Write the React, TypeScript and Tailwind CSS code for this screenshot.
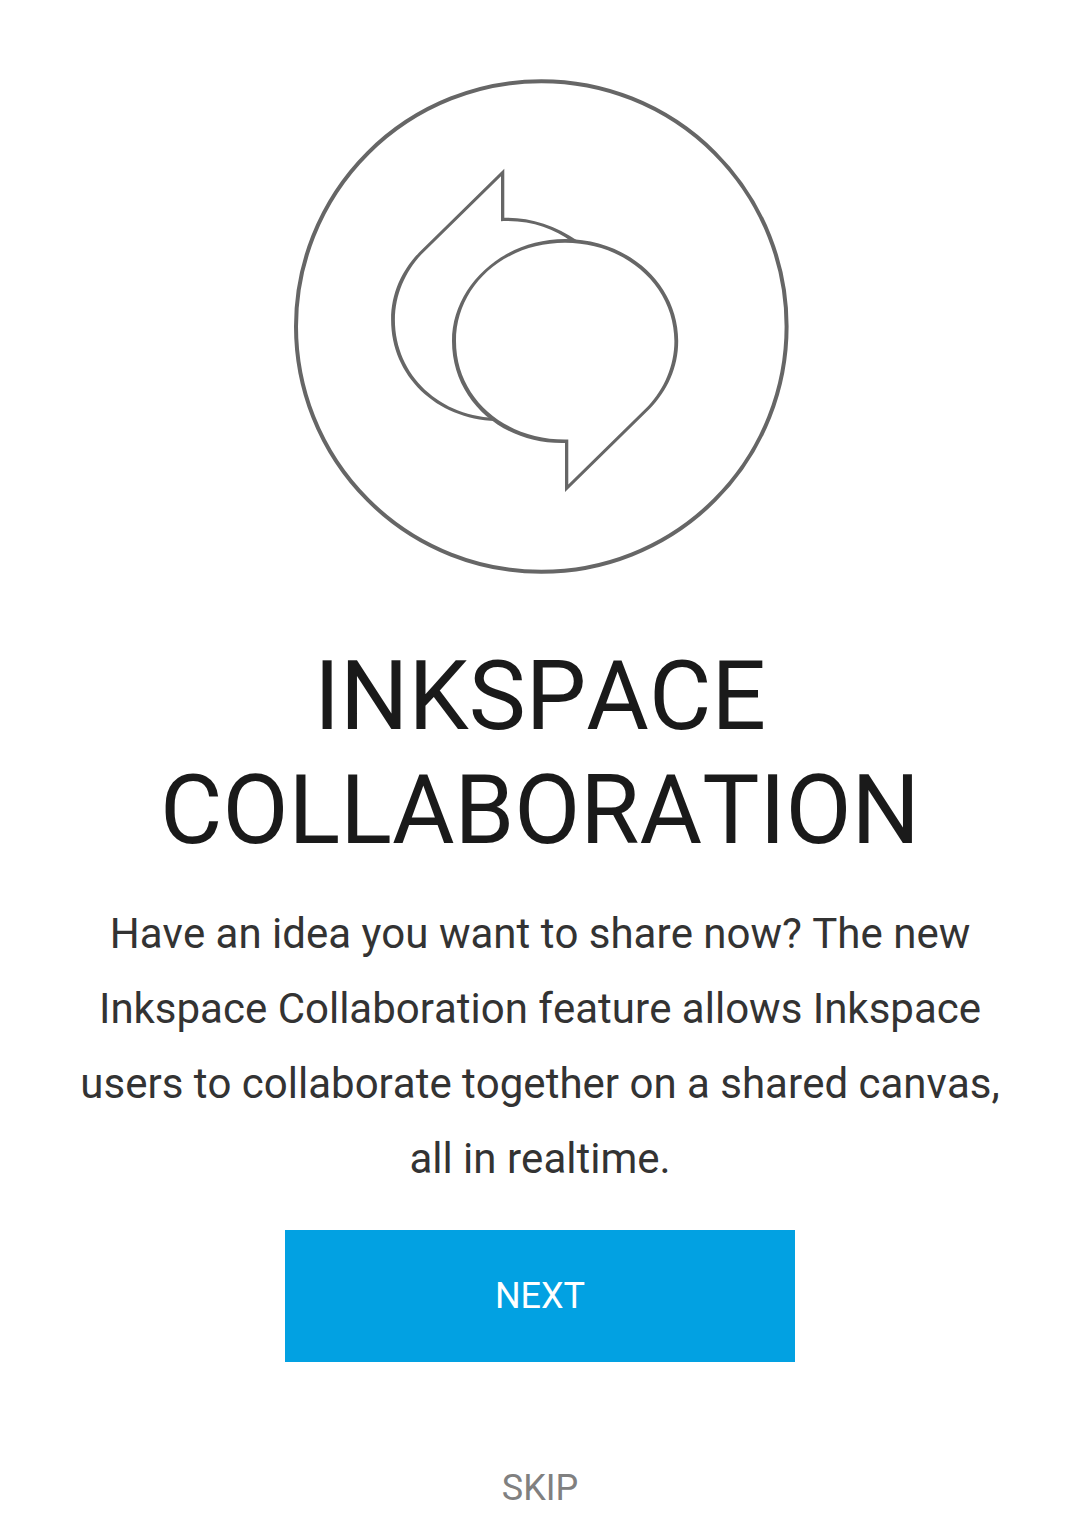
export default function App() {
  return (
    <main className="flex h-[1533px] w-[1080px] flex-col items-center overflow-hidden bg-white pt-[78px] font-['Roboto',sans-serif] text-center [font-kerning:none]">
      <svg className="ml-[2px] h-[498px] w-[498px] shrink-0" viewBox="292 78 498 498" fill="none" aria-hidden="true">
        <circle cx="541.3" cy="326.5" r="245.3" stroke="#666666" strokeWidth="4" />
        <path fill="#666666" d="M578 241C555 225 529 217 504.300 217.700V168.700L419.300 252.200C402.300 269.700 391.100 292.700 391.100 319.700C391.100 375.700 436 419 496 421L500 418C440 418 394.900 375 394.900 319.700C394.900 294.700 405.300 271.700 421.300 254.400L501 176.200V221.200C530 220 553 228 572 242Z" />
        <path fill="#666666" d="M565 239C629 239 678.200 285 678.200 341C678.200 368 667 391 650 408.500L565 492V443C502 444.500 452 400 452 341C452 286 503 239 565 239Z" />
        <path fill="white" d="M565 242.800C627 242.800 674.400 287 674.400 341C674.400 366 664 389 648 406.300L568.300 484.500V439.500C506 441 456 399 456 341C456 287 503 242.800 565 242.800Z" />
      </svg>
      <h1 className="mt-[63px] text-[96px] font-normal leading-[114px] text-[#1a1a1a]">INKSPACE<br />COLLABORATION</h1>
      <p className="mt-[29px] whitespace-nowrap text-[42px] leading-[75px] text-[#333333]">Have an idea you want to share now? The new<br />Inkspace Collaboration feature allows Inkspace<br />users to collaborate together on a shared canvas,<br />all in realtime.</p>
      <button className="mt-[34px] h-[132px] w-[510px] shrink-0 bg-[#02a1e2] text-[36px] text-white">NEXT</button>
      <button className="mt-[105px] text-[36px] leading-[42px] text-[#808080]">SKIP</button>
    </main>
  );
}
